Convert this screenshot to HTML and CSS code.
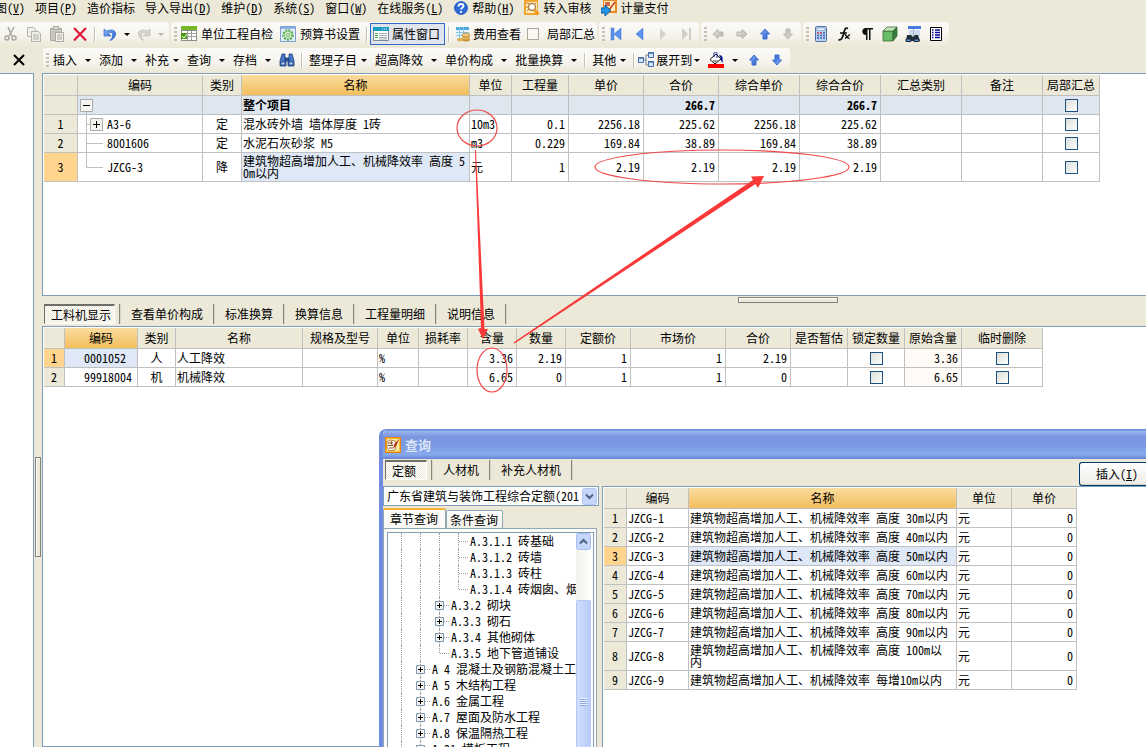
FILE: index.html
```html
<!DOCTYPE html>
<html lang="zh-CN">
<head>
<meta charset="utf-8">
<title>计价软件</title>
<link rel="stylesheet" href="styles.css">
</head>
<body>
<svg class="defs" aria-hidden="true">
  <defs>
    <linearGradient id="blue" x1="0" y1="0" x2="1" y2="1"><stop offset="0" stop-color="#8db8f8"/><stop offset="1" stop-color="#1c55c8"/></linearGradient>
    <linearGradient id="gray" x1="0" y1="0" x2="1" y2="1"><stop offset="0" stop-color="#e4e3dc"/><stop offset="1" stop-color="#b4b3aa"/></linearGradient>
    <symbol id="up" viewBox="0 0 16 16"><path d="M8 3l4.500 5H10v5H6V8H3.500z" stroke-width="1"/></symbol>
    <symbol id="expand" viewBox="0 0 9 9"><path d="M.5.5h8v8h-8z" fill="#f4f3ee" stroke="#7b98b8"/><path d="M2 4.500h5M4.500 2v5" stroke="#000"/></symbol>
    <symbol id="app" viewBox="0 0 16 16"><path d="M0 0h16v16H0z" fill="#e8830c"/><path d="M1.500 1.500h13v13h-13z" fill="#ffe8a0" stroke="#f8c23c"/><path d="M2 5l3-2 5 1 1 4-1 5-6 1-2-4z" fill="#fff" stroke="#a4601c" stroke-width=".8"/><path d="M3 6h5M3 8.500h5M4 11h4M6 4l1 4" stroke="#8a4a14" fill="none"/><path d="M14.500 1.500L9 7.500l-1 4 3-2.500z" fill="#a93414"/></symbol>
  </defs>
</svg>
<nav class="menu">
  <button class="menu-first">图(<u>V</u>)</button><button>项目(<u>P</u>)</button><button>造价指标</button><button>导入导出(<u>D</u>)</button><button>维护(<u>D</u>)</button><button>系统(<u>S</u>)</button><button>窗口(<u>W</u>)</button><button>在线服务(<u>L</u>)</button>
  <button><svg class="ico" viewBox="0 0 16 16"><circle cx="8" cy="8" r="7.500" fill="#d5e3f7"/><circle cx="8" cy="8" r="6.300" fill="#2c6bd6" stroke="#164ba8"/><path d="M5.500 6.500C5.500 3 10.500 3.500 10.500 6c0 1.700-2.500 1.800-2.500 3.500M8 11v2" fill="none" stroke="#fff" stroke-width="1.800"/></svg>帮助(<u>H</u>)</button>
  <button><svg class="ico" viewBox="0 0 16 16"><path d="M0 0h14v15H0z" fill="#f2a52c"/><path d="M2 2h11v11H2z" fill="#fff0bd"/><path d="M2 3l5 1-5 4M3 11l9-8" stroke="#d06a20" fill="none"/><circle cx="8" cy="7" r="3.500" fill="#fff" stroke="#b08850" stroke-width="1.500"/><path d="M10.500 10l4 4.500" stroke="#f39a1c" stroke-width="3"/></svg>转入审核</button>
  <button><svg class="ico" viewBox="0 0 16 16"><path d="M2 0h14v13H2z" fill="#e88a26"/><path d="M3 1h11v10H3z" fill="#ffeec2"/><path d="M4 3h5M4 5h5M8 10l6-8" stroke="#c8401c" stroke-width="1.500"/><path d="M0 8h4V5l6 5.500L4 16v-3H0z" fill="#2595e6" stroke="#11599f"/></svg>计量支付</button>
</nav>
<div class="bar">
  <div class="seg seg-edit">
    <div class="tools">
      <button aria-label="剪切"><svg class="ico" viewBox="0 0 16 16" fill="none" stroke="#a9a8a0" stroke-width="1.500"><path d="M5 1l4 9M11 1L6 10"/><circle cx="4" cy="12" r="2"/><circle cx="11" cy="12" r="2"/></svg></button>
      <button aria-label="复制"><svg class="ico" viewBox="0 0 16 16" fill="#efeee8" stroke="#b5b4aa"><path d="M1.500 1.500h6l2 2v7h-8z"/><path d="M5.500 5.500h7l2 2v8h-9z"/><path d="M7 9h6M7 11h6M7 13h6"/></svg></button>
      <button aria-label="粘贴"><svg class="ico" viewBox="0 0 16 16" stroke="#aaa9a0"><path d="M1.500 2.500h11v12h-11z" fill="#c9c8c0"/><path d="M4.500.5h5v3h-5z" fill="#deddd6"/><path d="M6.500 6.500h8v9h-8z" fill="#f3f2ec"/><path d="M8 9h5M8 11h5M8 13h5"/></svg></button>
      <button aria-label="删除"><svg class="ico" viewBox="0 0 16 16"><path d="M2 2l12 12.500M14 2L2 14.500" stroke="#dd1a36" stroke-width="2.200" fill="none"/></svg></button>
    </div>
    <span class="sep0"></span>
    <button aria-label="撤销"><svg class="ico" viewBox="0 0 16 16"><path d="M2 3v7h7L6.500 7.500C9 5 12 7 10 12l-2 2.500c8-2.500 8-14-3.500-9.500z" fill="url(#blue)" stroke="#3669c8" stroke-width=".7"/></svg></button><i class="caret"></i>
    <button aria-label="恢复"><svg class="ico" viewBox="0 0 16 16"><path d="M14 3v7H7l2.500-2.500C7 5 4 7 6 12l2 2.500C0 12 0 .5 11.500 5z" fill="#d4d3cc" stroke="#c3c2ba" stroke-width=".7"/></svg></button><i class="caret dim"></i>
  </div>
  <div class="seg">
    <i class="grip"></i>
    <button class="tb"><svg class="ico" viewBox="0 0 16 16"><path d="M0 1h16v14H0z" fill="#8a8f88"/><path d="M1 5h14v9H1z" fill="#fff"/><path d="M0 0h16v4H0z" fill="#77b82a"/><path d="M1 7.500h14M1 10.500h14M6.500 5v9M10.500 5v9" stroke="#9aa09a"/><path d="M0 7h6v6H0z" fill="#4c9a14"/><path d="M1 10l2 2 3-4" stroke="#fff" fill="none"/></svg>单位工程自检</button>
    <button class="tb"><svg class="ico" viewBox="0 0 16 16"><path d="M.5.5h15v15H.5z" fill="#e4effb" stroke="#7f9fcb"/><path d="M1 1h14v2H1z" fill="#8cb4ea"/><circle cx="8" cy="9" r="4.500" fill="#d5efce" stroke="#5fae5a" stroke-width="2.500" stroke-dasharray="2 1"/><circle cx="8" cy="9" r="1.500" fill="#fff" stroke="#5fae5a"/></svg>预算书设置</button>
    <i class="sep"></i>
    <button class="tb pressed"><svg class="ico" viewBox="0 0 16 16"><path d="M.5 1.500h15v13H.5z" fill="#fff" stroke="#7c8a94"/><path d="M0 1h16v4H0z" fill="#1b9ac4"/><path d="M9 3h1M11 3h1M13 3h1" stroke="#fff"/><path d="M2 7.500h3M2 9.500h3M2 11.500h3" stroke="#49b04a"/><path d="M6 7.500h8M6 9.500h8M6 11.500h8M6 13h8" stroke="#a5adb4"/></svg>属性窗口</button>
    <i class="sep"></i>
    <button class="tb slim"><svg class="ico" viewBox="0 0 16 16"><path d="M1 1h13v12H1z" fill="#e8f5fe"/><path d="M1 1h13v3H1z" fill="#4aa8e0"/><path d="M1 6.500h13M1 9.500h13M4.500 1v12M8.500 1v12" stroke="#86c4ea"/><ellipse cx="11" cy="13.500" rx="4" ry="2" fill="#c9923a"/><ellipse cx="11" cy="11.500" rx="4" ry="2" fill="#e2b35c"/><ellipse cx="11" cy="9" rx="4" ry="2" fill="#eec677" stroke="#a87828" stroke-width=".6"/><ellipse cx="5" cy="13.500" rx="3" ry="1.800" fill="#e0ac50"/></svg>费用查看</button>
    <label class="check-label"><input type="checkbox" class="box-gray">局部汇总</label>
  </div>
  <div class="seg">
    <i class="grip"></i>
    <button class="tb" aria-label="首条"><svg class="ico" viewBox="0 0 16 16"><path d="M2 2h3v12H2zM12 2v12L5 8z" fill="#5b93ee" stroke="#3c6fce" stroke-width=".5"/></svg></button>
    <button class="tb" aria-label="上一条"><svg class="ico" viewBox="0 0 16 16"><path d="M11 2v12L4 8z" fill="#5b93ee" stroke="#3c6fce" stroke-width=".5"/></svg></button>
    <button class="tb" aria-label="下一条"><svg class="ico" viewBox="0 0 16 16"><path d="M5 2v12l6-6z" fill="#d4d3cb"/></svg></button>
    <button class="tb" aria-label="末条"><svg class="ico" viewBox="0 0 16 16"><path d="M11 2h2v12h-2zM4 2v12l6-6z" fill="#d0cfc7"/></svg></button>
  </div>
  <div class="seg">
    <i class="grip"></i>
    <button class="tb" aria-label="左移"><svg class="ico" viewBox="0 0 16 16"><path d="M2 8l5-4.500V6h5v4H7v2.500z" fill="url(#gray)" stroke="#b5b4ab"/></svg></button>
    <button class="tb" aria-label="右移"><svg class="ico" viewBox="0 0 16 16"><path d="M13 8L8 3.500V6H3v4h5v2.500z" fill="url(#gray)" stroke="#b5b4ab"/></svg></button>
    <button class="tb" aria-label="上移"><svg class="ico blue-arrow"><use href="#up"/></svg></button>
    <button class="tb" aria-label="下移"><svg class="ico gray-arrow flip"><use href="#up"/></svg></button>
  </div>
  <div class="seg">
    <i class="grip"></i>
    <button class="tb" aria-label="计算器"><svg class="ico" viewBox="0 0 16 16"><rect x="2.500" y=".5" width="11" height="15" rx="1" fill="#b9d2f2" stroke="#54729f"/><path d="M4 2h8v2.500H4z" fill="#eef6ff" stroke="#6d8cb8" stroke-width=".6"/><path d="M4 7h2M7 7h2" stroke="#cf3346" stroke-width="1.500"/><path d="M10 7h2M4 9.500h2M7 9.500h2M10 9.500h2M4 12h2M7 12h2M10 12h2" stroke="#3961b4" stroke-width="1.500"/></svg></button>
    <button class="tb" aria-label="函数"><svg class="ico" viewBox="0 0 16 16" fill="none" stroke="#111" stroke-width="1.700"><path d="M12 2.500C9 1 8.500 4 7.500 8S5 15 2.500 13.500M4 7h7" /><path d="M8.500 8.500c2 0 2 4 5 4M14 8.500l-5 4" stroke-width="1.400"/></svg></button>
    <button class="tb" aria-label="段落标记"><svg class="ico" viewBox="0 0 16 16"><path d="M14 2H7C2 2 2 9 7 9v5h1.500V3.500H10V14h1.500V3.500H14z" fill="#111"/></svg></button>
    <button class="tb" aria-label="构件"><svg class="ico" viewBox="0 0 16 16" stroke="#376b36" stroke-width=".8"><path d="M1 5h10v10H1z" fill="#69bd6a"/><path d="M1 5l4-4h10l-4 4z" fill="#c6e6c0"/><path d="M11 5l4-4v9l-4 5z" fill="#397e3d"/></svg></button>
    <button class="tb" aria-label="查找清单"><svg class="ico" viewBox="0 0 16 16"><path d="M3 0h13v12H3z" fill="#f5f9ff"/><path d="M3 0h13v3H3z" fill="#447ce4"/><path d="M4 5h11M4 7h11M4 9h11M8.500 3v8" stroke="#a4b8d8"/><path d="M2 9h4l2 2 2-2h3l2 6H1z" fill="#222b38"/><path d="M1 13h5v2.500H1zM9 13h5v2.500H9z" fill="#5897d6" stroke="#1d2630"/></svg></button>
    <button class="tb" aria-label="列表"><svg class="ico" viewBox="0 0 16 16"><path d="M2.500 1.500h11v13h-11z" fill="#fff" stroke="#000"/><path d="M4 4h1.500M7 4h5M4 6.500h1.500M7 6.500h5M4 9h1.500M7 9h5M4 11.500h1.500M7 11.500h5" stroke="#0a0a9a" stroke-width="1.300"/></svg></button>
  </div>
</div>
<div class="bar bar2">
  <button class="close" aria-label="关闭"><svg class="ico" viewBox="0 0 16 16"><path d="M3 3l10 10M13 3L3 13" stroke="#000" stroke-width="2"/></svg></button>
  <div class="seg">
    <i class="grip"></i>
    <button class="tb drop">插入<i class="caret"></i></button>
    <button class="tb drop">添加<i class="caret"></i></button>
    <button class="tb drop tight">补充<i class="caret"></i></button>
    <button class="tb drop">查询<i class="caret"></i></button>
    <button class="tb drop">存档<i class="caret"></i></button>
    <button class="tb" aria-label="查找"><svg class="ico" viewBox="0 0 16 16" stroke="#1d3f7c" stroke-width=".8"><path d="M3 2h3v3l1 2v7H1V9z" fill="#4a78c8"/><path d="M13 2h-3v3L9 7v7h6V9z" fill="#4a78c8"/><path d="M6 6h4v3H6z" fill="#284f96"/><path d="M2 10h4v3H2zM10 10h4v3h-4z" fill="#b8d2f8"/></svg></button>
    <i class="sep"></i>
    <button class="tb drop tight">整理子目<i class="caret"></i></button>
    <button class="tb drop">超高降效<i class="caret"></i></button>
    <button class="tb drop">单价构成<i class="caret"></i></button>
    <button class="tb drop">批量换算<i class="caret"></i></button>
    <i class="sep"></i>
    <button class="tb drop tight">其他<i class="caret"></i></button>
    <i class="sep"></i>
    <button class="tb drop tight snug"><svg class="ico" viewBox="0 0 16 16" stroke="#4470ac"><path d="M5 8h3M8 3v10M8 3h2M8 13h2" fill="none" stroke="#6b7c90"/><path d="M.5 5.500h5v5h-5zM10.500.5h5v5h-5zM10.500 9.500h5v5h-5z" fill="#d5e6fb"/><path d="M0 6h6M10 1h6M10 10h6" stroke-width="1.500"/></svg>展开到<i class="caret"></i></button>
    <button class="tb drop" aria-label="填充颜色"><svg class="ico" viewBox="0 0 16 16"><path d="M0 12h16v4H0z" fill="red"/><path d="M2 7.500L8 2l5 5-6 5z" fill="#fff" stroke="#111"/><path d="M4 8l7 0-4 3z" fill="#999"/><path d="M6 5V1.500C6-.5 9-.5 9 1.500V6" fill="none" stroke="#111899"/><path d="M11 3c4 0 4 3 3.500 8-1-1-2-3-2-5z" fill="#0b1a8c"/></svg><i class="caret"></i></button>
    <button class="tb" aria-label="上移"><svg class="ico blue-arrow"><use href="#up"/></svg></button>
    <button class="tb" aria-label="下移"><svg class="ico blue-arrow flip"><use href="#up"/></svg></button>
  </div>
</div>
<main class="work">
  <aside class="side"></aside>
  <div class="split-v"><span class="handle-v"></span></div>
  <section class="panes">
    <div class="pane upper">
      <table class="grid main-grid">
        <colgroup><col><col><col><col><col><col><col><col><col><col><col><col><col></colgroup>
        <thead><tr><th></th><th>编码</th><th>类别</th><th class="hot">名称</th><th>单位</th><th>工程量</th><th>单价</th><th>合价</th><th>综合单价</th><th>综合合价</th><th>汇总类别</th><th>备注</th><th>局部汇总</th></tr></thead>
        <tbody>
          <tr class="sum"><th></th><td class="node"><svg width="29" height="18" viewBox="0 0 29 18"><path d="M8.500 16v2" stroke="#c0c0c0"/><path d="M2.500 3.500h12v12h-12z" fill="#f5f4f0" stroke="#aaa"/><path d="M5 9.500h7" stroke="#000"/></svg></td><td></td><td>整个项目</td><td></td><td></td><td></td><td class="n">266.7</td><td></td><td class="n">266.7</td><td></td><td></td><td class="c"><input type="checkbox" aria-label="局部汇总"></td></tr>
          <tr><th>1</th><td class="node"><div><svg width="29" height="18" viewBox="0 0 29 18"><path d="M8.500 0v18M9 9.500h3" stroke="#c0c0c0"/><path d="M12.500 3.500h12v12h-12z" fill="#f5f4f0" stroke="#aaa"/><path d="M15 9.500h7M18.500 6v7" stroke="#000"/></svg>A3-6</div></td><td class="c">定</td><td>混水砖外墙 墙体厚度 1砖</td><td>10m3</td><td class="n">0.1</td><td class="n">2256.18</td><td class="n">225.62</td><td class="n">2256.18</td><td class="n">225.62</td><td></td><td></td><td class="c"><input type="checkbox" aria-label="局部汇总"></td></tr>
          <tr><th>2</th><td class="node"><div><svg width="29" height="18" viewBox="0 0 29 18"><path d="M8.500 0v18M9 9.500h16" stroke="#c0c0c0"/></svg>8001606</div></td><td class="c">定</td><td>水泥石灰砂浆 M5</td><td>m3</td><td class="n">0.229</td><td class="n">169.84</td><td class="n">38.89</td><td class="n">169.84</td><td class="n">38.89</td><td></td><td></td><td class="c"><input type="checkbox" aria-label="局部汇总"></td></tr>
          <tr class="tall"><th class="cur">3</th><td class="node"><div><svg width="29" height="28" viewBox="0 0 29 28"><path d="M8.500 0v14.500H25" stroke="#c0c0c0" fill="none"/></svg>JZCG-3</div></td><td class="c">降</td><td class="sel">建筑物超高增加人工、机械降效率 高度 50m以内</td><td>元</td><td class="n">1</td><td class="n">2.19</td><td class="n">2.19</td><td class="n">2.19</td><td class="n">2.19</td><td></td><td></td><td class="c"><input type="checkbox" aria-label="局部汇总"></td></tr>
        </tbody>
      </table>
    </div>
    <div class="split-h">
      <span class="handle-h"></span>
      <div class="tabs"><button class="on">工料机显示</button><button>查看单价构成</button><button>标准换算</button><button>换算信息</button><button>工程量明细</button><button>说明信息</button></div>
    </div>
    <div class="pane lower">
      <table class="grid res-grid">
        <colgroup><col><col><col><col><col><col><col><col><col><col><col><col><col><col><col><col></colgroup>
        <thead><tr><th></th><th class="hot">编码</th><th>类别</th><th>名称</th><th>规格及型号</th><th>单位</th><th>损耗率</th><th>含量</th><th>数量</th><th>定额价</th><th>市场价</th><th>合价</th><th>是否暂估</th><th>锁定数量</th><th>原始含量</th><th>临时删除</th></tr></thead>
        <tbody>
          <tr><th class="cur">1</th><td class="code sel">0001052</td><td class="c">人</td><td>人工降效</td><td></td><td>%</td><td></td><td class="n">3.36</td><td class="n">2.19</td><td class="n">1</td><td class="n">1</td><td class="n">2.19</td><td></td><td class="c"><input type="checkbox" aria-label="锁定数量"></td><td class="n orig">3.36</td><td class="c"><input type="checkbox" aria-label="临时删除"></td></tr>
          <tr><th>2</th><td class="code">99918004</td><td class="c">机</td><td>机械降效</td><td></td><td>%</td><td></td><td class="n">6.65</td><td class="n">0</td><td class="n">1</td><td class="n">1</td><td class="n">0</td><td></td><td class="c"><input type="checkbox" aria-label="锁定数量"></td><td class="n orig">6.65</td><td class="c"><input type="checkbox" aria-label="临时删除"></td></tr>
        </tbody>
      </table>
    </div>
  </section>
</main>

<svg class="marks" width="1146" height="747" viewBox="0 0 1146 747" aria-hidden="true">
  <g fill="none" stroke="#f04a4a" stroke-width="1.200">
    <ellipse cx="477" cy="128" rx="20" ry="18"/>
    <ellipse cx="722" cy="167" rx="127" ry="17"/>
    <ellipse cx="492" cy="370" rx="15" ry="22"/>
  </g>
  <path d="M475 150l1 0 8.500 179 3.500 0-5 10-5-10 3-1z" fill="#fb3838"/>
  <path d="M513.500 342.500L753 180l-2-3.500 13-.5-6 12-2.500-4L514.500 343.500z" fill="#fb3838"/>
</svg>

<section class="dialog" role="dialog" aria-label="查询">
  <header class="title"><svg class="ico" viewBox="0 0 16 16"><use href="#app"/></svg>查询</header>
  <div class="dialog-top">
    <div class="tabs"><button class="on">定额</button><button>人材机</button><button>补充人材机</button></div>
    <button class="push">插入(<u>I</u>)</button>
  </div>
  <div class="dialog-body">
    <div class="browse">
      <div class="combo">
        <select aria-label="定额库"><option>广东省建筑与装饰工程综合定额(201</option></select>
        <svg class="combo-arrow" viewBox="0 0 15 17"><rect x=".5" y=".5" width="14" height="16" rx="2" fill="#c6d6fb" stroke="#b2c6f5"/><path d="M4 6.500l3.500 3.500L11 6.500" fill="none" stroke="#4d6185" stroke-width="2"/></svg>
      </div>
      <div class="page-tabs"><button class="on">章节查询</button><button>条件查询</button></div>
      <div class="page">
        <div class="tree-box">
          <ul class="tree">
            <li class="l3"><i class="v a"></i><i class="v b"></i><i class="v c3"></i><i class="v d"></i><i class="h"></i>A.3.1.1 砖基础</li>
            <li class="l3"><i class="v a"></i><i class="v b"></i><i class="v c3"></i><i class="v d"></i><i class="h"></i>A.3.1.2 砖墙</li>
            <li class="l3"><i class="v a"></i><i class="v b"></i><i class="v c3"></i><i class="v d"></i><i class="h"></i>A.3.1.3 砖柱</li>
            <li class="l3"><i class="v a"></i><i class="v b"></i><i class="v c3"></i><i class="v d end"></i><i class="h"></i>A.3.1.4 砖烟囱、烟</li>
            <li class="l2"><i class="v a"></i><i class="v b"></i><i class="v c3"></i><i class="h"></i><svg class="ex"><use href="#expand"/></svg>A.3.2 砌块</li>
            <li class="l2"><i class="v a"></i><i class="v b"></i><i class="v c3"></i><i class="h"></i><svg class="ex"><use href="#expand"/></svg>A.3.3 砌石</li>
            <li class="l2"><i class="v a"></i><i class="v b"></i><i class="v c3"></i><i class="h"></i><svg class="ex"><use href="#expand"/></svg>A.3.4 其他砌体</li>
            <li class="l2"><i class="v a"></i><i class="v b"></i><i class="v c3 end"></i><i class="h"></i>A.3.5 地下管道铺设</li>
            <li class="l1"><i class="v a"></i><i class="v b"></i><i class="h"></i><svg class="ex"><use href="#expand"/></svg>A 4 混凝土及钢筋混凝土工</li>
            <li class="l1"><i class="v a"></i><i class="v b"></i><i class="h"></i><svg class="ex"><use href="#expand"/></svg>A 5 木结构工程</li>
            <li class="l1"><i class="v a"></i><i class="v b"></i><i class="h"></i><svg class="ex"><use href="#expand"/></svg>A.6 金属工程</li>
            <li class="l1"><i class="v a"></i><i class="v b"></i><i class="h"></i><svg class="ex"><use href="#expand"/></svg>A.7 屋面及防水工程</li>
            <li class="l1"><i class="v a"></i><i class="v b"></i><i class="h"></i><svg class="ex"><use href="#expand"/></svg>A.8 保温隔热工程</li>
            <li class="l1"><i class="v a"></i><i class="v b"></i><i class="h"></i><svg class="ex"><use href="#expand"/></svg>A.21 模板工程</li>
          </ul>
          <div class="scroll">
            <svg class="scroll-up" viewBox="0 0 15 17"><rect x=".5" y=".5" width="14" height="16" rx="2" fill="#c6d6fb" stroke="#a9bef0"/><path d="M4 10.500L7.500 7l3.500 3.500" fill="none" stroke="#4d6185" stroke-width="2"/></svg>
            <div class="thumb"><i></i></div>
          </div>
        </div>
      </div>
    </div>
    <div class="result">
      <table class="grid quota-grid">
        <colgroup><col><col><col><col><col></colgroup>
        <thead><tr><th></th><th>编码</th><th class="hot">名称</th><th>单位</th><th>单价</th></tr></thead>
        <tbody>
          <tr><th>1</th><td>JZCG-1</td><td class="name">建筑物超高增加人工、机械降效率 高度 30m以内</td><td>元</td><td class="n">0</td></tr>
          <tr><th>2</th><td>JZCG-2</td><td class="name">建筑物超高增加人工、机械降效率 高度 40m以内</td><td>元</td><td class="n">0</td></tr>
          <tr><th class="cur">3</th><td>JZCG-3</td><td class="name sel">建筑物超高增加人工、机械降效率 高度 50m以内</td><td>元</td><td class="n">0</td></tr>
          <tr><th>4</th><td>JZCG-4</td><td class="name">建筑物超高增加人工、机械降效率 高度 60m以内</td><td>元</td><td class="n">0</td></tr>
          <tr><th>5</th><td>JZCG-5</td><td class="name">建筑物超高增加人工、机械降效率 高度 70m以内</td><td>元</td><td class="n">0</td></tr>
          <tr><th>6</th><td>JZCG-6</td><td class="name">建筑物超高增加人工、机械降效率 高度 80m以内</td><td>元</td><td class="n">0</td></tr>
          <tr><th>7</th><td>JZCG-7</td><td class="name">建筑物超高增加人工、机械降效率 高度 90m以内</td><td>元</td><td class="n">0</td></tr>
          <tr class="tall"><th>8</th><td>JZCG-8</td><td class="name">建筑物超高增加人工、机械降效率 高度 100m以内</td><td>元</td><td class="n">0</td></tr>
          <tr><th>9</th><td>JZCG-9</td><td class="name">建筑物超高增加人工、机械降效率 每增10m以内</td><td>元</td><td class="n">0</td></tr>
        </tbody>
      </table>
    </div>
  </div>
</section>
</body>
</html>
```

FILE: styles.css
```css
* { box-sizing: border-box; }
body {
  margin: 0;
  height: 100vh;
  display: flex;
  flex-direction: column;
  overflow: hidden;
  position: relative;
  background: #ece9d8;
  color: #000;
  font: 12px/16px "Noto Sans CJK SC", sans-serif;
  font-feature-settings: "hwid";
}
button {
  font: inherit;
  font-feature-settings: inherit;
  color: inherit;
  background: none;
  border: 0;
  padding: 0;
  display: flex;
  align-items: center;
  white-space: nowrap;
  flex: none;
}
.defs { position: absolute; width: 0; height: 0; }
.ico { width: 16px; height: 16px; display: block; flex: none; }

/* menu and toolbars */
.menu { display: flex; gap: 10px; height: 22px; padding-bottom: 6px; flex: none; }
.menu .ico { margin-right: 3px; }
.menu-first { margin-left: -5px; }
.bar { display: flex; gap: 2px; height: 26px; flex: none; }
.bar2 { height: 25px; }
.seg {
  display: flex;
  align-items: center;
  height: 24px;
  padding: 0 2px 0 3px;
  border-radius: 3px 3px 2px 0;
  background: linear-gradient(#fcfbf9, #f5f3ec 60%, #ece9d8);
  flex: none;
}
.seg-edit { gap: 6px; padding: 0 5px 0 3px; }
.tools { display: flex; gap: 7px; }
.grip { width: 3px; height: 15px; flex: none; background: repeating-linear-gradient(#c4c1b4 0 2px, transparent 2px 4px); }
.sep0, .sep { width: 2px; height: 15px; flex: none; border-left: 1px solid #c5c2b8; border-right: 1px solid #fff; }
.sep { margin: 0 2px 0 3px; }
.tb { padding: 0 3px 0 4px; gap: 4px; height: 22px; }
.pressed { border: 1px solid #316ac5; background: #e0e4ec; padding: 0 4px 0 2px; gap: 3px; }
.slim { padding: 0 3px; gap: 2px; }
.check-label { display: flex; align-items: center; gap: 8px; padding-left: 3px; }
.caret { width: 0; height: 0; border: 3px solid transparent; border-top-color: #000; border-bottom: 0; flex: none; }
.dim { border-top-color: #b8b6ac; }
.drop { gap: 8px; padding-right: 4px; }
.tight { gap: 4px; }
.snug { gap: 2px; padding-left: 1px; }
.blue-arrow { fill: url(#blue); stroke: #3c70d0; }
.gray-arrow { fill: url(#gray); stroke: #bdbcb4; }
.flip { transform: rotate(180deg); }
.close { width: 41px; height: 24px; padding-left: 11px; }

input[type="checkbox"] {
  appearance: none;
  display: block;
  width: 13px;
  height: 13px;
  margin: 0 auto;
  border: 1px solid #1c5180;
  background: linear-gradient(135deg, #dcdcd7, #fff);
}
input.box-gray { width: 12px; height: 12px; border-color: #aca899; background: #f8f7f2; }

/* work area */
.work { flex: 1; display: flex; min-height: 0; }
.side { width: 34px; background: #fff; border: solid #7f9db9; border-width: 1px 1px 0 0; }
.split-v { width: 8px; padding: 384px 1px 0; }
.handle-v, .handle-h { display: block; border: 1px solid #808080; background: #ece9d8; box-shadow: inset 1px 1px #fff; }
.handle-v { height: 100px; }
.panes { flex: 1; min-width: 0; display: flex; flex-direction: column; }
.pane { background: #fff; border: solid #7f9db9; border-width: 1px 0 1px 1px; padding: 1px; min-height: 0; overflow: hidden; }
.upper { flex: 219 1 0; }
.lower { flex: 417 1 0; }
.split-h { height: 30px; padding: 1px 0 0 2px; flex: none; }
.handle-h { width: 100px; height: 6px; margin-left: 694px; }

.tabs { display: flex; height: 21px; margin-top: 1px; }
.tabs button { height: 20px; padding: 0 10px; border-right: 2px groove #d8d5c8; }
.tabs .on {
  margin-right: 4px;
  padding: 0 3px 0 6px;
  border: 1px solid #fff;
  border-top: 2px solid #6f6e68;
  border-left: 1px solid #6f6e68;
  background: repeating-conic-gradient(#fff 0 25%, #ece9d8 0 50%) 0 0 / 2px 2px;
}
.tabs .on + button { border-left: 2px groove #d8d5c8; }

/* grids */
.grid { table-layout: fixed; border-collapse: separate; border-spacing: 0; line-height: 12px; }
.grid th, .grid td {
  padding: 0 2px 0 1px;
  height: 19px;
  border: solid #c0c0c0;
  border-width: 0 1px 1px 0;
  word-break: break-all;
  overflow: hidden;
  font-weight: normal;
  text-align: left;
  vertical-align: middle;
}
.grid th { background: #ece9d8; text-align: center; padding: 0; }
.grid thead th { height: 21px; white-space: nowrap; }
.grid thead .hot { background: linear-gradient(#fadb9f, #f2bf5c); }
.grid .cur { background: #ffd48c; }
.grid .sel { background: #dfe8f6; }
.grid .n { text-align: right; padding-right: 3px; }
.grid .c { text-align: center; padding: 0; }
.grid .code { padding-left: 19px; }
.grid .name { padding-right: 5px; }
.grid .orig { background: #fffbf6; }
.grid .tall td, .grid .tall th { height: 29px; }
.grid .sum td { background: #dee6f0; font-weight: bold; }
.grid .node { padding: 0; }
.node div { display: flex; align-items: center; }
.node svg { display: block; }

.main-grid { width: 1056px; }
.main-grid col { width: 81px; }
.main-grid col:nth-child(1) { width: 34px; }
.main-grid col:nth-child(2) { width: 125px; }
.main-grid col:nth-child(3) { width: 39px; }
.main-grid col:nth-child(4) { width: 228px; }
.main-grid col:nth-child(5) { width: 42px; }
.main-grid col:nth-child(6), .main-grid col:nth-child(13) { width: 57px; }
.main-grid col:nth-child(7), .main-grid col:nth-child(8) { width: 75px; }

.res-grid { width: 999px; }
.res-grid col { width: 57px; }
.res-grid col:nth-child(1) { width: 21px; }
.res-grid col:nth-child(2) { width: 73px; }
.res-grid col:nth-child(3) { width: 38px; }
.res-grid col:nth-child(4) { width: 127px; }
.res-grid col:nth-child(5) { width: 75px; }
.res-grid col:nth-child(6) { width: 41px; }
.res-grid col:nth-child(7), .res-grid col:nth-child(8), .res-grid col:nth-child(9) { width: 49px; }
.res-grid col:nth-child(10), .res-grid col:nth-child(12) { width: 65px; }
.res-grid col:nth-child(11) { width: 95px; }
.res-grid col:nth-child(16) { width: 81px; }

.quota-grid { width: 473px; }
.quota-grid col:nth-child(1) { width: 23px; }
.quota-grid col:nth-child(2) { width: 62px; }
.quota-grid col:nth-child(3) { width: 268px; }
.quota-grid col:nth-child(4) { width: 55px; }
.quota-grid col:nth-child(5) { width: 65px; }

.marks { position: absolute; left: 0; top: 0; pointer-events: none; }

/* query window */
.dialog {
  position: absolute;
  left: 379px;
  top: 429px;
  right: 0;
  bottom: 0;
  display: flex;
  flex-direction: column;
  border-left: 4px solid #6f8ce0;
  border-radius: 7px 0 0 0;
  background: #ece9d8;
  overflow: hidden;
}
.title {
  display: flex;
  align-items: center;
  gap: 4px;
  height: 30px;
  flex: none;
  padding: 2px 0 0 2px;
  font-size: 13px;
  font-weight: bold;
  color: #dbe5fa;
  background: linear-gradient(#5f7fd6, #98b2ee 8%, #7c97e0 25%, #7b98e2 55%, #86a9ec 85%, #6684d4);
}
.dialog-top { display: flex; justify-content: space-between; height: 27px; flex: none; padding-left: 2px; }
.dialog-top .on { min-width: 42px; }
.push {
  width: 67px;
  height: 24px;
  margin-top: 3px;
  padding-left: 16px;
  border: 1px solid #003c74;
  border-right: 0;
  border-radius: 3px 0 0 3px;
  background: linear-gradient(#fff, #ecebe5);
  box-shadow: inset 0 -1px #d6d0c5;
}
.dialog-body { flex: 1; display: flex; min-height: 0; gap: 3px; }
.browse { width: 216px; display: flex; flex-direction: column; min-height: 0; }
.combo { display: flex; align-items: center; height: 20px; flex: none; border: 1px solid #7f9db9; background: #fff; padding-right: 1px; }
.combo select {
  appearance: none;
  flex: 1;
  min-width: 0;
  height: 18px;
  padding: 0 0 0 3px;
  border: 0;
  background: #fff;
  color: #000;
  font: inherit;
  font-feature-settings: inherit;
  text-overflow: clip;
}
.combo-arrow { width: 15px; height: 17px; flex: none; }
.page-tabs { display: flex; align-items: flex-end; height: 22px; flex: none; padding-top: 2px; }
.page-tabs button { height: 18px; padding: 0 4px 0 3px; border: 1px solid #91a7b4; border-bottom: 0; border-radius: 2px 2px 0 0; background: linear-gradient(#fff, #f0f0ea); }
.page-tabs .on { height: 20px; padding: 0 7px 0 6px; border-top: 2px solid #f9b233; background: #fbfaf7; }
.page { flex: 1; min-height: 0; margin-right: 2px; padding: 3px 2px 0 3px; border: 1px solid #91a7b4; border-bottom: 0; background: #fbfaf7; }
.tree-box { display: flex; height: 100%; border: 1px solid #7f9db9; border-bottom: 0; background: #fff; overflow: hidden; }
.tree { flex: 1; min-width: 0; margin: 0; padding: 0; list-style: none; overflow: hidden; }
.tree li { position: relative; height: 16px; white-space: nowrap; }
.tree .l3 { padding-left: 82px; }
.tree .l2 { padding-left: 63px; }
.tree .l1 { padding-left: 44px; }
.tree .v { position: absolute; top: 0; bottom: 0; border-left: 1px dotted #a09f90; }
.tree .a { left: 13px; }
.tree .b { left: 32px; }
.tree .c3 { left: 51px; }
.tree .d { left: 70px; }
.tree .end { bottom: 8px; }
.tree .h { position: absolute; top: 8px; width: 9px; border-top: 1px dotted #a09f90; }
.l3 .h { left: 71px; }
.l2 .h { left: 52px; }
.l1 .h { left: 33px; }
.ex { position: absolute; top: 4px; width: 9px; height: 9px; }
.l2 .ex { left: 47px; }
.l1 .ex { left: 28px; }
.scroll { width: 15px; display: flex; flex-direction: column; background: linear-gradient(90deg, #f1f0ea, #fefefb); margin-right: 2px; flex: none; }
.scroll-up { width: 15px; height: 17px; flex: none; }
.thumb { flex: 1; margin-top: 50px; border: 1px solid #b5c8f5; border-bottom: 0; border-radius: 2px 2px 0 0; background: linear-gradient(90deg, #d0defd, #b9cdfa); }
.thumb i { display: block; width: 7px; height: 8px; margin: 97px auto 0; background: repeating-linear-gradient(#eef4fe 0 1px, #8ca8ea 1px 2px); }
.result { flex: 1; min-width: 0; border: solid #7f9db9; border-width: 1px 0 0 1px; padding: 1px; background: #fff; overflow: hidden; }
```
